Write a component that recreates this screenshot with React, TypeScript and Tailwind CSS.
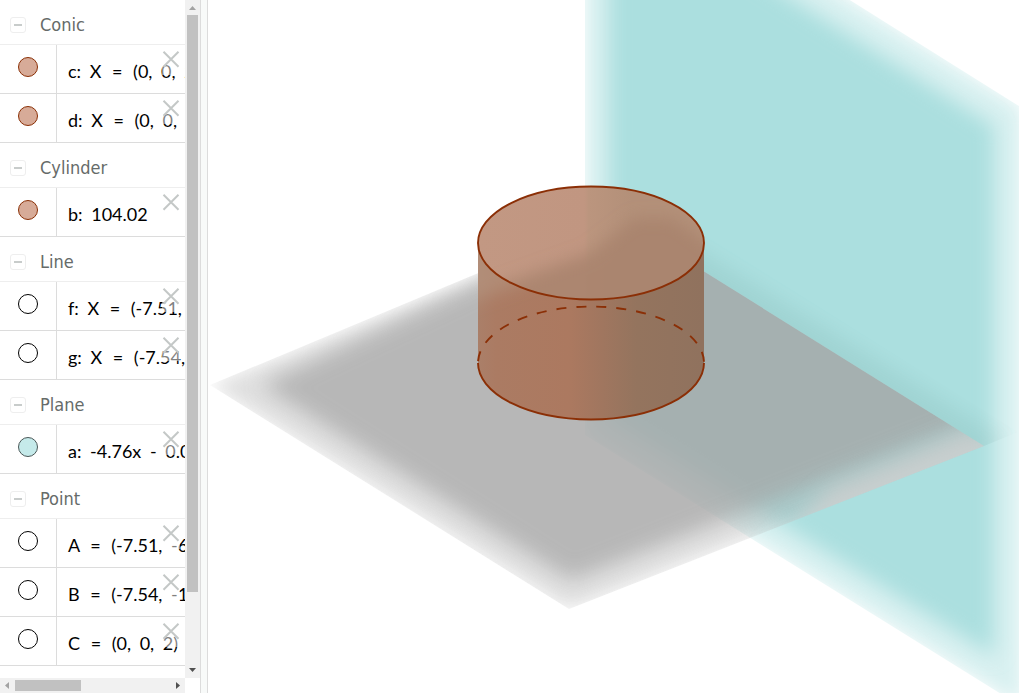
import React from 'react';

interface AlgebraItem {
  text: string;
  swatch: string;
}

interface AlgebraGroup {
  title: string;
  items: AlgebraItem[];
}

const brown = 'border-[#8a2f05] bg-[#d7ab98]';
const teal = 'border-[#4a5757] bg-[#c5eaea]';
const empty = 'border-black bg-white';

const groups: AlgebraGroup[] = [
  {
    title: 'Conic',
    items: [
      { text: 'c: X = (0, 0, 2)', swatch: brown },
      { text: 'd: X = (0, 0,', swatch: brown },
    ],
  },
  { title: 'Cylinder', items: [{ text: 'b: 104.02', swatch: brown }] },
  {
    title: 'Line',
    items: [
      { text: 'f: X = (-7.51,', swatch: empty },
      { text: 'g: X = (-7.54,', swatch: empty },
    ],
  },
  { title: 'Plane', items: [{ text: 'a: -4.76x - 0.0', swatch: teal }] },
  {
    title: 'Point',
    items: [
      { text: 'A = (-7.51, -6', swatch: empty },
      { text: 'B = (-7.54, -1', swatch: empty },
      { text: 'C = (0, 0, 2)', swatch: empty },
    ],
  },
];

const GroupHeader: React.FC<{ title: string }> = ({ title }) => (
  <div className="flex h-[45px] items-center border-b border-[#eeeeee] pt-1.5 pl-2.5">
    <button
      aria-label={`Collapse ${title}`}
      className="flex h-4 w-4 items-center justify-center rounded-[3px] border border-[#eeeeee]"
    >
      <span className="h-0.5 w-2 bg-[#c8cccb]"></span>
    </button>
    <h2 className="pl-3.5 font-['DejaVu_Sans_Condensed','DejaVu_Sans',sans-serif] text-[18px] leading-6 text-[#666b69]">
      {title}
    </h2>
  </div>
);

const Formula: React.FC<{ text: string }> = ({ text }) => (
  <>
    {text.split(' ').map((token, i) => (
      <span key={i} className={token === '=' ? 'mr-1.5 ml-0.5' : 'mr-1'}>
        {token}{' '}
      </span>
    ))}
  </>
);

const ItemRow: React.FC<{ item: AlgebraItem }> = ({ item }) => (
  <li className="relative flex h-[49px] border-b border-[#dcdcdc]">
    <div className="flex w-[57px] shrink-0 justify-center border-r border-[#dcdcdc] pt-3">
      <button
        aria-label={`Show or hide ${item.text}`}
        className={`h-5 w-5 rounded-full border ${item.swatch}`}
      ></button>
    </div>
    <div className="min-w-0 flex-1 overflow-hidden pt-3.5 pl-[11px] font-['Lato',sans-serif] text-[18px] leading-6 whitespace-nowrap text-black">
      <Formula text={item.text} />
    </div>
    <button
      aria-label={`Delete ${item.text}`}
      className="absolute top-1.5 right-[5px] h-6 w-[18px] bg-white/50"
    >
      <svg viewBox="0 0 18 24" className="h-full w-full" fill="none" stroke="#c4c8c7" strokeWidth="2">
        <path d="M1.5 .8 16.5 15.8M16.5 .8 1.5 15.8" />
      </svg>
    </button>
  </li>
);

const VerticalScrollbar: React.FC = () => (
  <div className="flex w-[15px] shrink-0 flex-col items-center bg-[#f1f1f1]">
    <svg viewBox="0 0 15 15" className="h-[15px] w-[15px]">
      <path d="M4 10h7L7.500 6z" fill="#a3a3a3" />
    </svg>
    <div className="w-[11px] flex-1">
      <div className="h-[89%] w-full bg-[#c1c1c1]"></div>
    </div>
    <svg viewBox="0 0 15 15" className="h-[15px] w-[15px]">
      <path d="M4 5h7L7.500 9z" fill="#505050" />
    </svg>
  </div>
);

const HorizontalScrollbar: React.FC = () => (
  <div className="flex h-[15px] flex-1 items-center bg-[#f1f1f1]">
    <svg viewBox="0 0 15 15" className="h-[15px] w-[15px]">
      <path d="M9 4v7L5 7.500z" fill="#a3a3a3" />
    </svg>
    <div className="h-[11px] flex-1">
      <div className="h-full w-[66px] bg-[#c1c1c1]"></div>
    </div>
    <svg viewBox="0 0 15 15" className="h-[15px] w-[15px]">
      <path d="M6 4v7l4-3.500z" fill="#505050" />
    </svg>
  </div>
);

const Scene: React.FC = () => (
  <svg
    viewBox="208 0 811 693"
    preserveAspectRatio="xMidYMid slice"
    className="h-full w-full"
    role="img"
    aria-label="Cylinder standing on a plane"
  >
    <defs>
      <filter id="soft" filterUnits="userSpaceOnUse" x="100" y="-300" width="1100" height="1200">
        <feGaussianBlur stdDeviation="10" />
      </filter>
      <filter id="softEdge" filterUnits="userSpaceOnUse" x="100" y="-300" width="1100" height="1200">
        <feGaussianBlur stdDeviation="9" />
      </filter>
      <filter id="softLid" filterUnits="userSpaceOnUse" x="400" y="100" width="400" height="400">
        <feGaussianBlur stdDeviation="8" />
      </filter>
      <clipPath id="tealEdge">
        <path d="M585-166 1022 108V707L585 435z" />
      </clipPath>
      <clipPath id="greyFront">
        <path d="M210 385 569 609 984 446 615 216z" />
      </clipPath>
      <clipPath id="greyBack">
        <path d="M615 216 984 446 1018 432 661 207z" />
      </clipPath>
      <clipPath id="lid">
        <ellipse cx="591" cy="243" rx="113" ry="56.500" />
      </clipPath>
      <clipPath id="wall">
        <path d="M478 243A113 56.500 0 0 0 704 243V363A113 56.500 0 0 1 478 363z" />
      </clipPath>
      <linearGradient id="wallFill" gradientUnits="userSpaceOnUse" x1="478" y1="0" x2="704" y2="0">
        <stop offset="0" stopColor="#aa7f69" />
        <stop offset=".08" stopColor="#ab7b63" />
        <stop offset=".4" stopColor="#ac7960" />
        <stop offset=".55" stopColor="#a0765f" />
        <stop offset=".7" stopColor="#94745e" />
        <stop offset="1" stopColor="#90725e" />
      </linearGradient>
      <linearGradient id="lidFill" gradientUnits="userSpaceOnUse" x1="478" y1="0" x2="704" y2="0">
        <stop offset="0" stopColor="#c29883" />
        <stop offset=".47" stopColor="#c19681" />
        <stop offset=".49" stopColor="#bb957e" />
        <stop offset=".68" stopColor="#b39079" />
        <stop offset="1" stopColor="#b39079" />
      </linearGradient>
    </defs>

    {/* Vertical plane */}
    <g clipPath="url(#tealEdge)" fill="#abdfdf">
      <path d="M585-166 1022 108V707L585 435z" fillOpacity=".46" filter="url(#softEdge)" />
      <path d="M609-180V418L994 656V126L609-116z" filter="url(#soft)" />
    </g>

    {/* Horizontal plane, the strip behind and the part in front */}
    <g clipPath="url(#greyBack)">
      <path
        d="M570 230 650 220 1006 440 960 480z"
        fill="#70a09a"
        fillOpacity=".18"
        filter="url(#soft)"
      />
    </g>
    <g clipPath="url(#greyFront)">
      <g fill="#a4a4a4" opacity=".79">
        <path d="M210 385 569 609 1018 432 661 207z" fillOpacity=".45" filter="url(#softEdge)" />
        <path d="M262 385 571 580 1000 411 665 195z" filter="url(#soft)" />
      </g>
      {/* Lighter rim where it crosses the vertical plane */}
      <path
        d="M760 560 1010 462 975 427 950 438 830 488z"
        fill="#d2cccc"
        fillOpacity=".75"
        filter="url(#soft)"
      />
    </g>

    {/* Cylinder */}
    <path
      d="M478 243A113 56.500 0 0 0 704 243V363A113 56.500 0 0 1 478 363z"
      fill="url(#wallFill)"
    />
    <g clipPath="url(#wall)">
      <path
        d="M450 230H550L560 270 450 310z"
        fill="#b79c87"
        fillOpacity=".5"
        filter="url(#softLid)"
      />
    </g>
    <ellipse cx="591" cy="243" rx="113" ry="56.500" fill="url(#lidFill)" />
    <g clipPath="url(#lid)">
      <path
        d="M450 303 590 253 635 218 672 218 730 260V330H450z"
        fill="#a8836c"
        fillOpacity=".85"
        filter="url(#softLid)"
      />
    </g>
    <g fill="none" stroke="#8b2f06" strokeWidth="1.900">
      <ellipse cx="591" cy="243" rx="113" ry="56.500" />
      <path d="M478 363A113 56.500 0 0 0 704 363" />
      <path
        d="M478 363A113 56.500 0 0 1 704 363"
        strokeDasharray="10 10"
        strokeDashoffset="18"
      />
    </g>
  </svg>
);

const App: React.FC = () => {
  return (
    <div className="flex h-screen overflow-hidden bg-white pr-[5px] pb-0.5">
      <aside className="flex w-[200px] shrink-0 flex-col">
        <div className="flex min-h-0 flex-1">
          <div className="min-w-0 flex-1 overflow-hidden">
            {groups.map((group) => (
              <section key={group.title}>
                <GroupHeader title={group.title} />
                <ul>
                  {group.items.map((item) => (
                    <ItemRow key={item.text} item={item} />
                  ))}
                </ul>
              </section>
            ))}
          </div>
          <VerticalScrollbar />
        </div>
        <div className="flex pr-[15px]">
          <HorizontalScrollbar />
        </div>
      </aside>

      {/* Splitter */}
      <div className="w-2 shrink-0 border-x border-[#dcdcdc] bg-[#f8faf9]"></div>

      <main className="min-w-0 flex-1">
        <Scene />
      </main>
    </div>
  );
};

export default App;
